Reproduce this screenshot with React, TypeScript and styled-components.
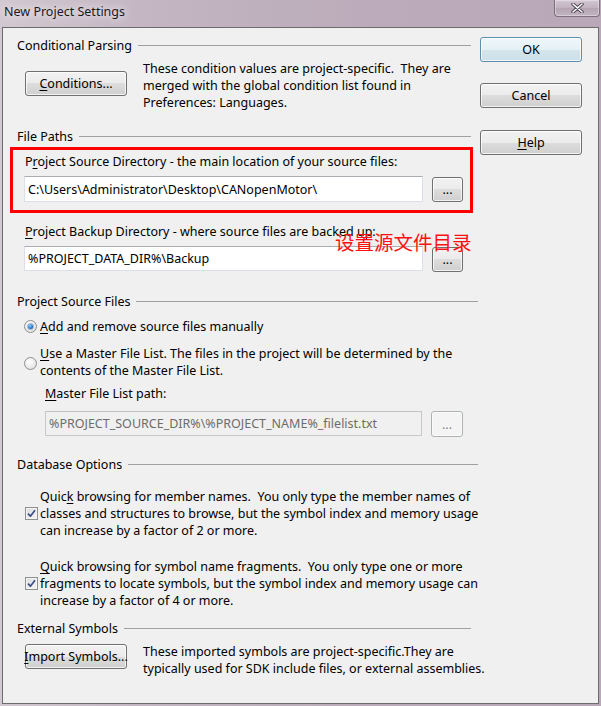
import React from "react";
import styled, { createGlobalStyle } from "styled-components";

const Global = createGlobalStyle`
  html, body { margin: 0; padding: 0; }
  body {
    width: 601px; height: 706px; overflow: hidden;
    font-family: "Noto Sans", "Segoe UI", sans-serif;
    font-size: 12.5px; color: #000;
  }
  * { box-sizing: border-box; }
`;

const Window = styled.div`
  width: 601px;
  height: 706px;
  display: flex;
  flex-direction: column;
  padding: 0 2px 2px 2px;
  background: linear-gradient(90deg, #d2c8d1 0%, #c3b5c2 25%, #bcacbb 60%, #b9a9b8 100%);
`;

const TitleBar = styled.div`
  height: 27px;
  display: flex;
  align-items: flex-start;
  padding: 3px 0 0 2px;
`;

const Title = styled.div`
  line-height: 17px;
  font-size: 12.5px;
  color: #1a1a1a;
  text-shadow: 0 0 6px #f0eaf0, 0 0 10px #e8e0e8;
`;

const CloseButton = styled.div`
  margin: -3px -1px 0 auto;
  width: 46px;
  height: 17px;
  border: 1px solid #7d6f7c;
  border-top: none;
  border-radius: 0 0 4px 4px;
  background: linear-gradient(#d3c7d2, #c0b1bf 50%, #b5a5b4 50%, #c2b4c1);
  box-shadow: inset 0 0 0 1px rgba(255, 255, 255, 0.35);
  display: flex;
  align-items: center;
  justify-content: center;
`;

const Client = styled.div`
  flex: 1;
  display: flex;
  border: 1px solid #6c6c6c;
  background: #f0f0f0;
`;

const MainColumn = styled.div`
  position: relative;
  width: 475px;
  padding-left: 14px;
  display: flex;
  flex-direction: column;
`;

const ButtonColumn = styled.div`
  margin-left: 2px;
  padding-top: 9px;
  display: flex;
  flex-direction: column;
`;

const GroupHeader = styled.div<{ $top: number; $end: number }>`
  margin-top: ${(p) => p.$top}px;
  margin-right: ${(p) => p.$end}px;
  display: flex;
  align-items: center;
  line-height: 17px;
  height: 17px;
`;

const HeaderLine = styled.div`
  flex: 1;
  height: 1px;
  margin-left: 6px;
  background: #a0a0a0;
`;

const Row = styled.div<{ $top: number; $indent?: number }>`
  margin-top: ${(p) => p.$top}px;
  margin-left: ${(p) => p.$indent ?? 0}px;
  display: flex;
  align-items: flex-start;
`;

const TextBlock = styled.div<{ $gap?: number }>`
  margin-left: ${(p) => p.$gap ?? 0}px;
  display: flex;
  flex-direction: column;
`;

const Line = styled.div`
  line-height: 17px;
  height: 17px;
  white-space: pre;
`;

const Label = styled.div<{ $top: number; $indent: number }>`
  margin-top: ${(p) => p.$top}px;
  margin-left: ${(p) => p.$indent}px;
  line-height: 17px;
  white-space: pre;
`;

const Button = styled.div<{ $w?: number; $h?: number; $mt?: number; $default?: boolean; $disabled?: boolean }>`
  width: ${(p) => p.$w ?? 102}px;
  height: ${(p) => p.$h ?? 25}px;
  margin-top: ${(p) => p.$mt ?? 0}px;
  flex-shrink: 0;
  display: flex;
  align-items: center;
  justify-content: center;
  border-radius: 3px;
  border: 1px solid ${(p) => (p.$default ? "#5f8fae" : p.$disabled ? "#adb2b5" : "#707070")};
  background: ${(p) =>
    p.$default
      ? "linear-gradient(#eef7fb 0%, #e4f1f7 50%, #d5e5ed 50%, #cddfe8 100%)"
      : p.$disabled
      ? "#f4f4f4"
      : "linear-gradient(#f2f2f2 0%, #ebebeb 50%, #dddddd 50%, #cfcfcf 100%)"};
  box-shadow: inset 0 0 0 1px ${(p) => (p.$disabled ? "#fafafa" : "rgba(255,255,255,0.75)")};
  color: ${(p) => (p.$disabled ? "#838383" : "#000")};
  line-height: 17px;
  white-space: pre;
`;

const Input = styled.div<{ $w: number; $h?: number; $disabled?: boolean }>`
  width: ${(p) => p.$w}px;
  height: ${(p) => p.$h ?? 26}px;
  flex-shrink: 0;
  display: flex;
  align-items: center;
  padding-left: 3px;
  border: 1px solid ${(p) => (p.$disabled ? "#c9c9c9" : "#dbdfe6")};
  border-top-color: ${(p) => (p.$disabled ? "#c2c2c2" : "#abadb3")};
  background: ${(p) => (p.$disabled ? "#f0f0f0" : "#ffffff")};
  color: ${(p) => (p.$disabled ? "#6d6d6d" : "#000")};
  line-height: 17px;
  white-space: pre;
`;

const FieldRow = styled.div<{ $top: number; $indent: number; $gap: number }>`
  margin-top: ${(p) => p.$top}px;
  margin-left: ${(p) => p.$indent}px;
  display: flex;
  align-items: flex-start;
  gap: ${(p) => p.$gap}px;
`;

const OptionRow = styled.div<{ $top: number; $indent: number }>`
  margin-top: ${(p) => p.$top}px;
  margin-left: ${(p) => p.$indent}px;
  display: flex;
  align-items: center;
`;

const Radio = styled.div<{ $checked?: boolean; $mt?: number }>`
  width: 13px;
  height: 13px;
  margin-top: ${(p) => p.$mt ?? 0}px;
  border-radius: 50%;
  border: 1px solid #8e8f8f;
  background: radial-gradient(circle at 40% 35%, #ffffff 0%, #e8e8e8 60%, #d6d6d6 100%);
  display: flex;
  align-items: center;
  justify-content: center;
  margin-right: 3px;
  flex-shrink: 0;
  &::after {
    content: "";
    display: ${(p) => (p.$checked ? "block" : "none")};
    width: 5px;
    height: 5px;
    border-radius: 50%;
    background: radial-gradient(circle at 40% 35%, #8fd0ff 0%, #2a7bd0 55%, #124c94 100%);
    box-shadow: 0 0 0 1px rgba(30, 80, 140, 0.35);
  }
`;

const CheckBox = styled.div`
  width: 13px;
  height: 13px;
  border: 1px solid #8e8f8f;
  background: linear-gradient(135deg, #dcdcdc 0%, #f6f6f6 100%);
  box-shadow: inset 0 0 0 1px #f4f4f4;
  margin-right: 2px;
  flex-shrink: 0;
  display: flex;
  align-items: center;
  justify-content: center;
`;

const Annotation = styled.div`
  position: absolute;
  left: 7px;
  top: 119px;
  width: 463px;
  height: 66px;
  border: 3px solid #ff0000;
  pointer-events: none;
`;

const AnnotationText = styled.div`
  position: absolute;
  left: 332px;
  top: 204px;
  font-family: "Noto Sans CJK SC", sans-serif;
  font-size: 19.5px;
  line-height: 20px;
  color: #ff1010;
  white-space: nowrap;
`;

const U = styled.span`
  text-decoration: underline;
  text-underline-offset: 2px;
`;

const Check = () => (
  <svg width="9" height="9" viewBox="0 0 9 9">
    <path d="M1 4.6 L3.4 7.2 L8 1.2" fill="none" stroke="#3a4f86" strokeWidth="1.7" strokeLinejoin="round" />
  </svg>
);

const CloseX = () => (
  <svg width="13" height="10" viewBox="0 0 13 10">
    <path d="M2 1 L11 9 M11 1 L2 9" stroke="#4e4450" strokeWidth="3.4" strokeLinecap="round" />
    <path d="M2 1 L11 9 M11 1 L2 9" stroke="#ffffff" strokeWidth="1.6" strokeLinecap="round" />
  </svg>
);

export default function App() {
  return (
    <>
      <Global />
      <Window>
        <TitleBar>
          <Title>New Project Settings</Title>
          <CloseButton>
            <CloseX />
          </CloseButton>
        </TitleBar>
        <Client>
          <MainColumn>
            <GroupHeader $top={9} $end={7}>
              Conditional Parsing
              <HeaderLine />
            </GroupHeader>
            <Row $top={6} $indent={8}>
              <Button $mt={11}>
                <span>
                  <U>C</U>onditions...
                </span>
              </Button>
              <TextBlock $gap={16}>
                <Line>{"These condition values are project-specific.  They are"}</Line>
                <Line>merged with the global condition list found in</Line>
                <Line>Preferences: Languages.</Line>
              </TextBlock>
            </Row>

            <GroupHeader $top={17} $end={7}>
              File Paths
              <HeaderLine />
            </GroupHeader>
            <Label $top={8} $indent={8}>
              P<U>r</U>oject Source Directory - the main location of your source files:
            </Label>
            <FieldRow $top={6} $indent={7} $gap={9}>
              <Input $w={399}>C:\Users\Administrator\Desktop\CANopenMotor\</Input>
              <Button $w={31} $mt={1}>...</Button>
            </FieldRow>
            <Label $top={21} $indent={8}>
              <U>P</U>roject Backup Directory - where source files are backed up:
            </Label>
            <FieldRow $top={6} $indent={7} $gap={9}>
              <Input $w={399} $h={25}>%PROJECT_DATA_DIR%\Backup</Input>
              <Button $w={31} $mt={1}>...</Button>
            </FieldRow>

            <GroupHeader $top={21} $end={0}>
              Project Source Files
              <HeaderLine />
            </GroupHeader>
            <OptionRow $top={8} $indent={7}>
              <Radio $checked />
              <TextBlock>
                <Line>
                  <U>A</U>dd and remove source files manually
                </Line>
              </TextBlock>
            </OptionRow>
            <OptionRow $top={10} $indent={7}>
              <Radio $mt={3} />
              <TextBlock>
                <Line>
                  <U>U</U>se a Master File List. The files in the project will be determined by the
                </Line>
                <Line>contents of the Master File List.</Line>
              </TextBlock>
            </OptionRow>
            <Label $top={6} $indent={28}>
              <U>M</U>aster File List path:
            </Label>
            <FieldRow $top={9} $indent={28} $gap={9}>
              <Input $w={377} $h={25} $disabled>
                %PROJECT_SOURCE_DIR%\%PROJECT_NAME%_filelist.txt
              </Input>
              <Button $w={32} $h={26} $disabled>...</Button>
            </FieldRow>

            <GroupHeader $top={19} $end={0}>
              Database Options
              <HeaderLine />
            </GroupHeader>
            <OptionRow $top={15} $indent={8}>
              <CheckBox>
                <Check />
              </CheckBox>
              <TextBlock>
                <Line>
                  Quic<U>k</U>
                  {" browsing for member names.  You only type the member names of"}
                </Line>
                <Line>classes and structures to browse, but the symbol index and memory usage</Line>
                <Line>can increase by a factor of 2 or more.</Line>
              </TextBlock>
            </OptionRow>
            <OptionRow $top={19} $indent={8}>
              <CheckBox>
                <Check />
              </CheckBox>
              <TextBlock>
                <Line>
                  <U>Q</U>
                  {"uick browsing for symbol name fragments.  You only type one or more"}
                </Line>
                <Line>fragments to locate symbols, but the symbol index and memory usage can</Line>
                <Line>increase by a factor of 4 or more.</Line>
              </TextBlock>
            </OptionRow>

            <GroupHeader $top={11} $end={7}>
              External Symbols
              <HeaderLine />
            </GroupHeader>
            <Row $top={6} $indent={8}>
              <Button $mt={1}>
                <span>
                  <U>I</U>mport Symbols...
                </span>
              </Button>
              <TextBlock $gap={16}>
                <Line>These imported symbols are project-specific.They are</Line>
                <Line>typically used for SDK include files, or external assemblies.</Line>
              </TextBlock>
            </Row>

            <Annotation />
            <AnnotationText>设置源文件目录</AnnotationText>
          </MainColumn>

          <ButtonColumn>
            <Button $default>OK</Button>
            <Button $mt={21}>Cancel</Button>
            <Button $mt={22}>
              <span>
                <U>H</U>elp
              </span>
            </Button>
          </ButtonColumn>
        </Client>
      </Window>
    </>
  );
}
